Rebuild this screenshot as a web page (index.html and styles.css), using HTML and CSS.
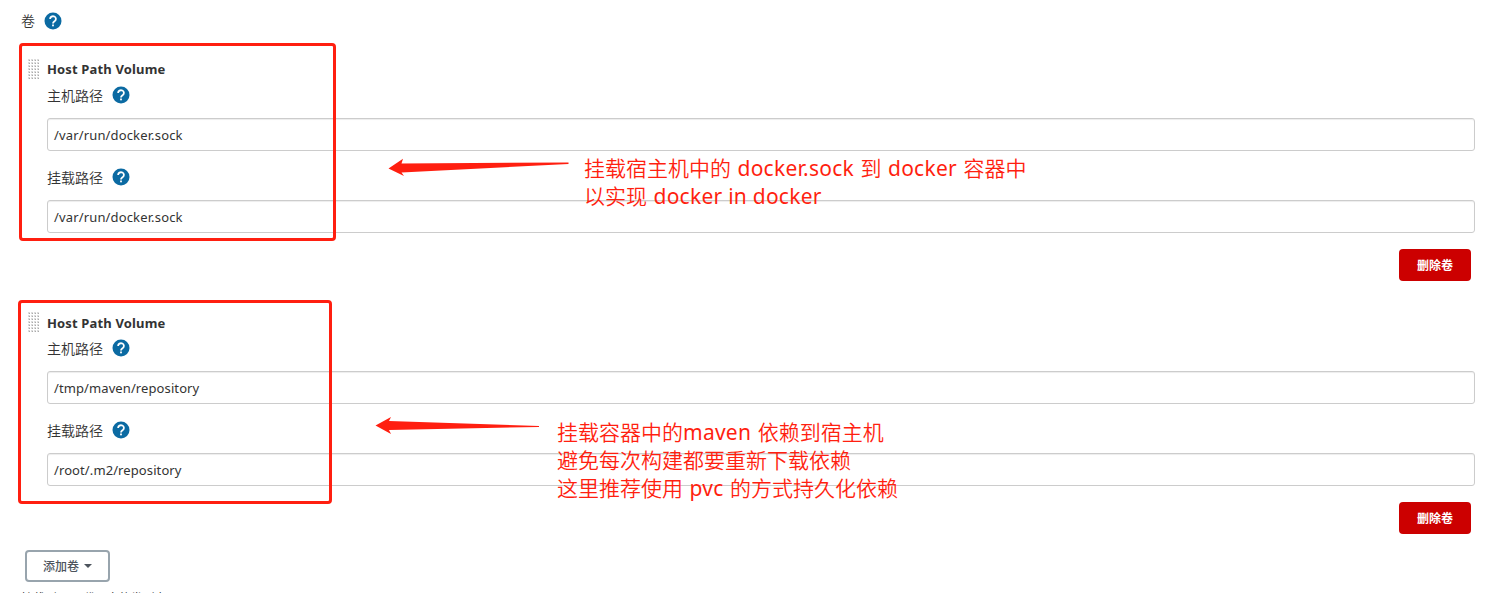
FILE: index.html
```html
<!DOCTYPE html>
<html lang="zh-CN">
<head>
<meta charset="utf-8">
<title>Host Path Volume</title>
<link rel="stylesheet" href="styles.css">
</head>
<body>
<svg width="0" height="0" class="defs">
  <defs>
    <symbol id="help" viewBox="0 0 18 18">
      <circle cx="9" cy="9" r="8.5" fill="#0b6aa2"/>
      <path d="M6.100 7a2.900 2.700 0 1 1 4.500 2.200C9.500 10 9 10.200 9 11.400" fill="none" stroke="#fff" stroke-width="1.800"/>
      <rect x="8.100" y="12.500" width="1.800" height="1.800" fill="#fff"/>
    </symbol>
    <pattern id="dots" width="3" height="3" patternUnits="userSpaceOnUse">
      <rect width="2" height="2" fill="#dcdcdc"/>
      <rect x="1" y="1" width="1" height="1" fill="#aaa"/>
    </pattern>
  </defs>
</svg>
<main class="page">
  <div class="section-label"><span class="cjk">卷</span><svg class="help"><use href="#help"/></svg></div>

  <section class="volume">
    <div class="title"><svg class="handle"><rect width="12" height="21" fill="url(#dots)"/></svg><b>Host Path Volume</b></div>
    <div class="label"><span class="cjk">主机路径</span><svg class="help"><use href="#help"/></svg></div>
    <div class="input"><span class="v-sock">/var/run/docker.sock</span></div>
    <div class="label second"><span class="cjk">挂载路径</span><svg class="help"><use href="#help"/></svg></div>
    <div class="input"><span class="v-sock">/var/run/docker.sock</span></div>
    <div class="actions"><button class="delete">删除卷</button></div>
  </section>

  <section class="volume">
    <div class="title lower"><svg class="handle"><rect width="12" height="21" fill="url(#dots)"/></svg><b>Host Path Volume</b></div>
    <div class="label"><span class="cjk">主机路径</span><svg class="help"><use href="#help"/></svg></div>
    <div class="input"><span class="v-repo">/tmp/maven/repository</span></div>
    <div class="label second"><span class="cjk">挂载路径</span><svg class="help"><use href="#help"/></svg></div>
    <div class="input"><span class="v-repo">/root/.m2/repository</span></div>
    <div class="actions"><button class="delete">删除卷</button></div>
  </section>

  <button class="add">添加卷<i class="caret"></i></button>
  <div class="hint">挂载到 Pod 代理中的卷列表</div>

  <div class="frame frame-one"></div>
  <div class="frame frame-two"></div>
  <svg class="arrows" viewBox="0 0 1491 593">
    <path fill="#ff1f10" d="M388.500 168.500L403 158.800L401.500 163.500L568.500 162.500V164L401.500 172.500L404 176Z"/>
    <path fill="#ff1f10" d="M375.500 425.500L391 417L389 421L539 426V427L389 430L391 434Z"/>
  </svg>
  <div class="note note-one">
    <div>挂载宿主机中的 <span class="lat">docker.sock</span> 到 <span class="lat">docker</span> 容器中</div>
    <div>以实现 <span class="lat">docker in docker</span></div>
  </div>
  <div class="note note-two">
    <div>挂载容器中的<span class="lat">maven</span> 依赖到宿主机</div>
    <div>避免每次构建都要重新下载依赖</div>
    <div>这里推荐使用 <span class="lat">pvc</span> 的方式持久化依赖</div>
  </div>
</main>
</body>
</html>
```
FILE: styles.css
```css
* { box-sizing: border-box; }
body { margin: 0; background: #fff; color: #333; font: 13px "Noto Sans", "Noto Sans CJK SC", sans-serif; }
.defs { position: absolute; }
.page { position: relative; width: 1491px; height: 593px; overflow: hidden; }
.cjk { font: 350 14px/24px "Noto Sans CJK SC", sans-serif; padding-bottom: 2px; }
.help { width: 18px; height: 18px; flex: none; }
.section-label { display: flex; align-items: center; gap: 9px; height: 42px; padding-left: 21px; }
.volume { height: 253px; padding: 12px 16px 0 47px; }
.title { display: flex; align-items: center; height: 30px; margin-left: -19px; gap: 7px; font-size: 13px; }
.title b { letter-spacing: 0.150px; }
.title.lower b { padding-top: 2px; }
.handle { width: 12px; height: 21px; }
.title.lower .handle { margin-top: 1px; }
.label { display: flex; align-items: center; gap: 9px; height: 23px; margin-bottom: 11px; }
.label .help { margin-top: -1px; }
.label.second { margin-top: 14px; margin-bottom: 12px; }
.label.second .cjk { padding-bottom: 0; }
.label.second .help { margin-top: 1px; }
.input { height: 33px; padding: 0 6px; border: 1px solid #ccc; border-radius: 3px; box-shadow: inset 0 1px 1px rgba(0,0,0,.075); line-height: 32px; }
.v-sock { letter-spacing: 0.150px; }
.v-repo { letter-spacing: 0.100px; }
.actions { display: flex; justify-content: flex-end; margin-top: 16px; padding-right: 4px; }
button { font: bold 12px/16px "Noto Sans CJK SC", sans-serif; height: 32px; padding: 0; }
.delete { width: 72px; border: 0; border-radius: 4px; background: #c00; color: #fff; }
.add { display: flex; align-items: center; justify-content: center; gap: 5px; width: 85px; margin: 2px 0 0 25px; border: 2px solid #98a4ad; border-radius: 4px; background: #fff; color: #4d545d; font-weight: 500; }
.caret { border: 4px solid transparent; border-top-color: #4d545d; border-bottom: 0; }
.hint { margin: 7px 0 0 21px; font: 12px/18px "Noto Sans CJK SC", sans-serif; letter-spacing: -0.150px; }
.frame { position: absolute; border: 3px solid #ff1f10; border-radius: 4px; }
.frame-one { left: 19px; top: 43px; width: 317px; height: 198px; }
.frame-two { left: 18px; top: 300px; width: 314px; height: 204px; }
.arrows { position: absolute; left: 0; top: 0; width: 1491px; height: 593px; }
.note { position: absolute; color: #ff1f10; font: 350 21px/28px "Noto Sans CJK SC", sans-serif; white-space: nowrap; word-spacing: 1.800px; }
.note div { height: 28px; }
.note .lat { font: 400 21px/20px "Noto Sans", sans-serif; letter-spacing: 0.250px; word-spacing: 0; }
.note-one { left: 584px; top: 153px; }
.note-two { left: 557px; top: 417px; }
```
